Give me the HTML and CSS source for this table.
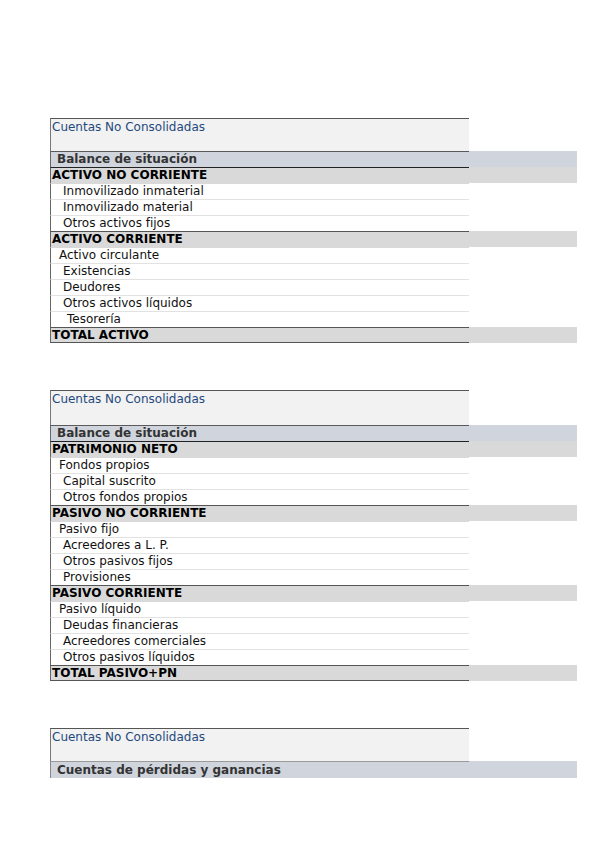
FILE: index.html
```html
<!DOCTYPE html>
<html lang="es">
<head>
<meta charset="utf-8">
<title>Cuentas No Consolidadas</title>
<link rel="stylesheet" href="styles.css">
</head>
<body>
<div class="page">
  <section class="sheet first">
    <div class="head"><div class="main">Cuentas No Consolidadas</div></div>
    <div class="row title"><div class="main">Balance de situación</div><div class="ext"></div></div>
    <div class="row sec"><div class="main">ACTIVO NO CORRIENTE</div><div class="ext"></div></div>
    <div class="row item l2"><div class="main">Inmovilizado inmaterial</div></div>
    <div class="row item l2"><div class="main">Inmovilizado material</div></div>
    <div class="row item l2"><div class="main">Otros activos fijos</div></div>
    <div class="row sec"><div class="main">ACTIVO CORRIENTE</div><div class="ext"></div></div>
    <div class="row item l1"><div class="main">Activo circulante</div></div>
    <div class="row item l2"><div class="main">Existencias</div></div>
    <div class="row item l2"><div class="main">Deudores</div></div>
    <div class="row item l2"><div class="main">Otros activos líquidos</div></div>
    <div class="row item l3"><div class="main">Tesorería</div></div>
    <div class="row sec last"><div class="main">TOTAL ACTIVO</div><div class="ext"></div></div>
  </section>

  <section class="sheet second">
    <div class="head tall"><div class="main">Cuentas No Consolidadas</div></div>
    <div class="row title"><div class="main">Balance de situación</div><div class="ext"></div></div>
    <div class="row sec"><div class="main">PATRIMONIO NETO</div><div class="ext"></div></div>
    <div class="row item l1"><div class="main">Fondos propios</div></div>
    <div class="row item l2"><div class="main">Capital suscrito</div></div>
    <div class="row item l2"><div class="main">Otros fondos propios</div></div>
    <div class="row sec"><div class="main">PASIVO NO CORRIENTE</div><div class="ext"></div></div>
    <div class="row item l1"><div class="main">Pasivo fijo</div></div>
    <div class="row item l2"><div class="main">Acreedores a L. P.</div></div>
    <div class="row item l2"><div class="main">Otros pasivos fijos</div></div>
    <div class="row item l2"><div class="main">Provisiones</div></div>
    <div class="row sec"><div class="main">PASIVO CORRIENTE</div><div class="ext"></div></div>
    <div class="row item l1"><div class="main">Pasivo líquido</div></div>
    <div class="row item l2"><div class="main">Deudas financieras</div></div>
    <div class="row item l2"><div class="main">Acreedores comerciales</div></div>
    <div class="row item l2"><div class="main">Otros pasivos líquidos</div></div>
    <div class="row sec last"><div class="main">TOTAL PASIVO+PN</div><div class="ext"></div></div>
  </section>

  <section class="sheet third">
    <div class="head"><div class="main">Cuentas No Consolidadas</div></div>
    <div class="row title light"><div class="main">Cuentas de pérdidas y ganancias</div><div class="ext"></div></div>
  </section>
</div>
</body>
</html>
```

FILE: styles.css
```css
html, body {
  margin: 0;
  padding: 0;
  background: #ffffff;
}

body {
  font-family: "DejaVu Sans", "Liberation Sans", sans-serif;
  font-size: 12px;
  color: #111;
}

.page {
  padding: 118px 0 0 50px;
  width: 527px;
}

.sheet {
  display: flex;
  flex-direction: column;
}

.second { margin-top: 47px; }
.third { margin-top: 47px; }

.head {
  display: grid;
  grid-template-columns: 419px;
}

.head .main {
  box-sizing: border-box;
  height: 33px;
  background: #f2f2f2;
  border-top: 1px solid #555;
  border-left: 1px solid #777;
  color: #1f497d;
  line-height: 16px;
  padding: 0 0 0 1px;
  font-size: 12px;
}

.head.tall .main { height: 35px; }

.row {
  display: grid;
  grid-template-columns: 419px 108px;
  height: 16px;
}

.row .main {
  box-sizing: border-box;
  height: 16px;
  border-left: 1px solid #666;
  line-height: 15px;
  white-space: nowrap;
  overflow: hidden;
}

.row.title .main {
  background: #d0d5dd;
  border-top: 1px solid #5a5a5a;
  font-weight: bold;
  color: #333;
  padding-left: 6px;
  height: 16px;
}

.row.title .ext { background: #d0d5dd; }

.row.title.light .main {
  border-top: 1px solid #9a9a9a;
  border-left: 1px solid #888;
  height: 17px;
  line-height: 16px;
}
.row.title.light { height: 17px; }

.row.sec .main {
  background: #d9d9d9;
  border-top: 1px solid #222;
  font-weight: bold;
  color: #000;
  padding-left: 1px;
}

.row.sec .ext { background: #d9d9d9; }

.row.sec.last .main {
  border-top: 1px solid #555;
  border-bottom: 1px solid #555;
}

.row.item .main {
  background: #fff;
  border-top: 1px solid #e2e2e2;
}

.row.item.l1 .main { padding-left: 8px; }
.row.item.l2 .main { padding-left: 12px; }
.row.item.l3 .main { padding-left: 16px; }

.row.title + .row.sec .main { border-top-color: #222; }
.row.sec + .row.item .main { border-top-color: #d9d9d9; }
.row.item + .row.sec .main { border-top-color: #555; }
```
